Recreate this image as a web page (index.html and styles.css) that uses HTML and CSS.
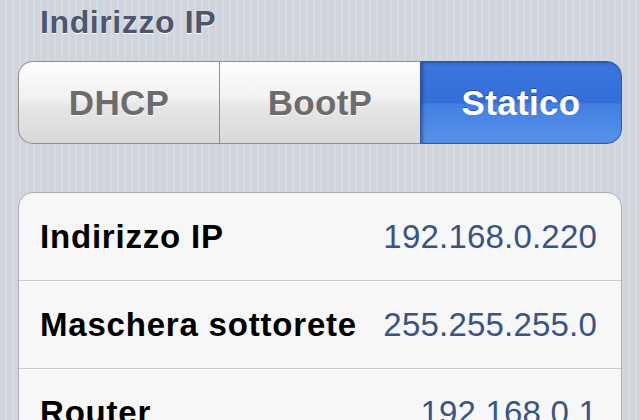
FILE: index.html
```html
<!DOCTYPE html>
<html lang="it">
<head>
<meta charset="utf-8">
<title>Indirizzo IP</title>
<link rel="stylesheet" href="styles.css">
</head>
<body>
<div class="page">
  <h2 class="section-title">Indirizzo IP</h2>
  <div class="segmented">
    <div class="seg seg-first">DHCP</div>
    <div class="seg seg-mid">BootP</div>
    <div class="seg seg-last selected">Statico</div>
  </div>
  <div class="card">
    <div class="row"><span class="label">Indirizzo IP</span><span class="value">192.168.0.220</span></div>
    <div class="row"><span class="label">Maschera sottorete</span><span class="value">255.255.255.0</span></div>
    <div class="row"><span class="label">Router</span><span class="value">192.168.0.1</span></div>
  </div>
</div>
</body>
</html>
```
FILE: styles.css
```css
html, body {
  margin: 0;
  padding: 0;
  height: 100%;
  overflow: hidden;
}
body {
  font-family: "Liberation Sans", Arial, Helvetica, sans-serif;
  background-color: #d1d6de;
  background-image: repeating-linear-gradient(90deg, #d0d5dd 0px, #d0d5dd 5px, #d6dae1 5px, #d6dae1 7px);
}
.page {
  padding: 2px 18px 0 18px;
}
.section-title {
  margin: 0;
  padding-left: 22px;
  height: 40px;
  line-height: 40px;
  font-size: 32px;
  font-weight: bold;
  letter-spacing: 0.6px;
  color: #4c566c;
  text-shadow: 0 1px 0 #ffffff;
}
.segmented {
  margin-top: 19px;
  height: 83px;
  display: flex;
}
.seg {
  flex: 1;
  display: flex;
  align-items: center;
  justify-content: center;
  font-size: 35px;
  font-weight: bold;
  letter-spacing: 0.3px;
  color: #6c6c6c;
  text-shadow: 0 1px 0 #ffffff;
  background: linear-gradient(to bottom, #fdfdfd 0%, #f1f1f1 45%, #e6e6e6 55%, #d9d9d9 100%);
  border-top: 1px solid #8f8f8f;
  border-bottom: 1px solid #8f8f8f;
  box-sizing: border-box;
}
.seg-first {
  border-left: 1px solid #8f8f8f;
  border-radius: 15px 0 0 15px;
}
.seg-mid {
  border-left: 1px solid #909090;
}
.seg-last {
  border-radius: 0 15px 15px 0;
}
.seg.selected {
  color: #ffffff;
  text-shadow: 0 -1px 0 rgba(0, 0, 0, 0.35);
  background: linear-gradient(to bottom, #3b76dd 0%, #346fd9 50%, #4180e2 52%, #5891ea 100%);
  border: 1px solid #2b58a8;
  box-shadow: inset 2px 1px 3px rgba(0, 0, 0, 0.3);
}
.card {
  margin-top: 48px;
  background: #f7f7f7;
  border: 1px solid #a9aeb5;
  border-radius: 15px;
  box-shadow: 0 1px 0 rgba(255, 255, 255, 0.6);
}
.row {
  height: 87px;
  display: flex;
  align-items: center;
  justify-content: space-between;
  padding: 0 24px 0 21px;
  border-bottom: 1px solid #c6c8cb;
}
.row:last-child {
  border-bottom: none;
}
.label {
  font-size: 33px;
  font-weight: bold;
  letter-spacing: 0.8px;
  color: #000000;
}
.value {
  font-size: 33px;
  letter-spacing: 0.2px;
  color: #385487;
}
```
